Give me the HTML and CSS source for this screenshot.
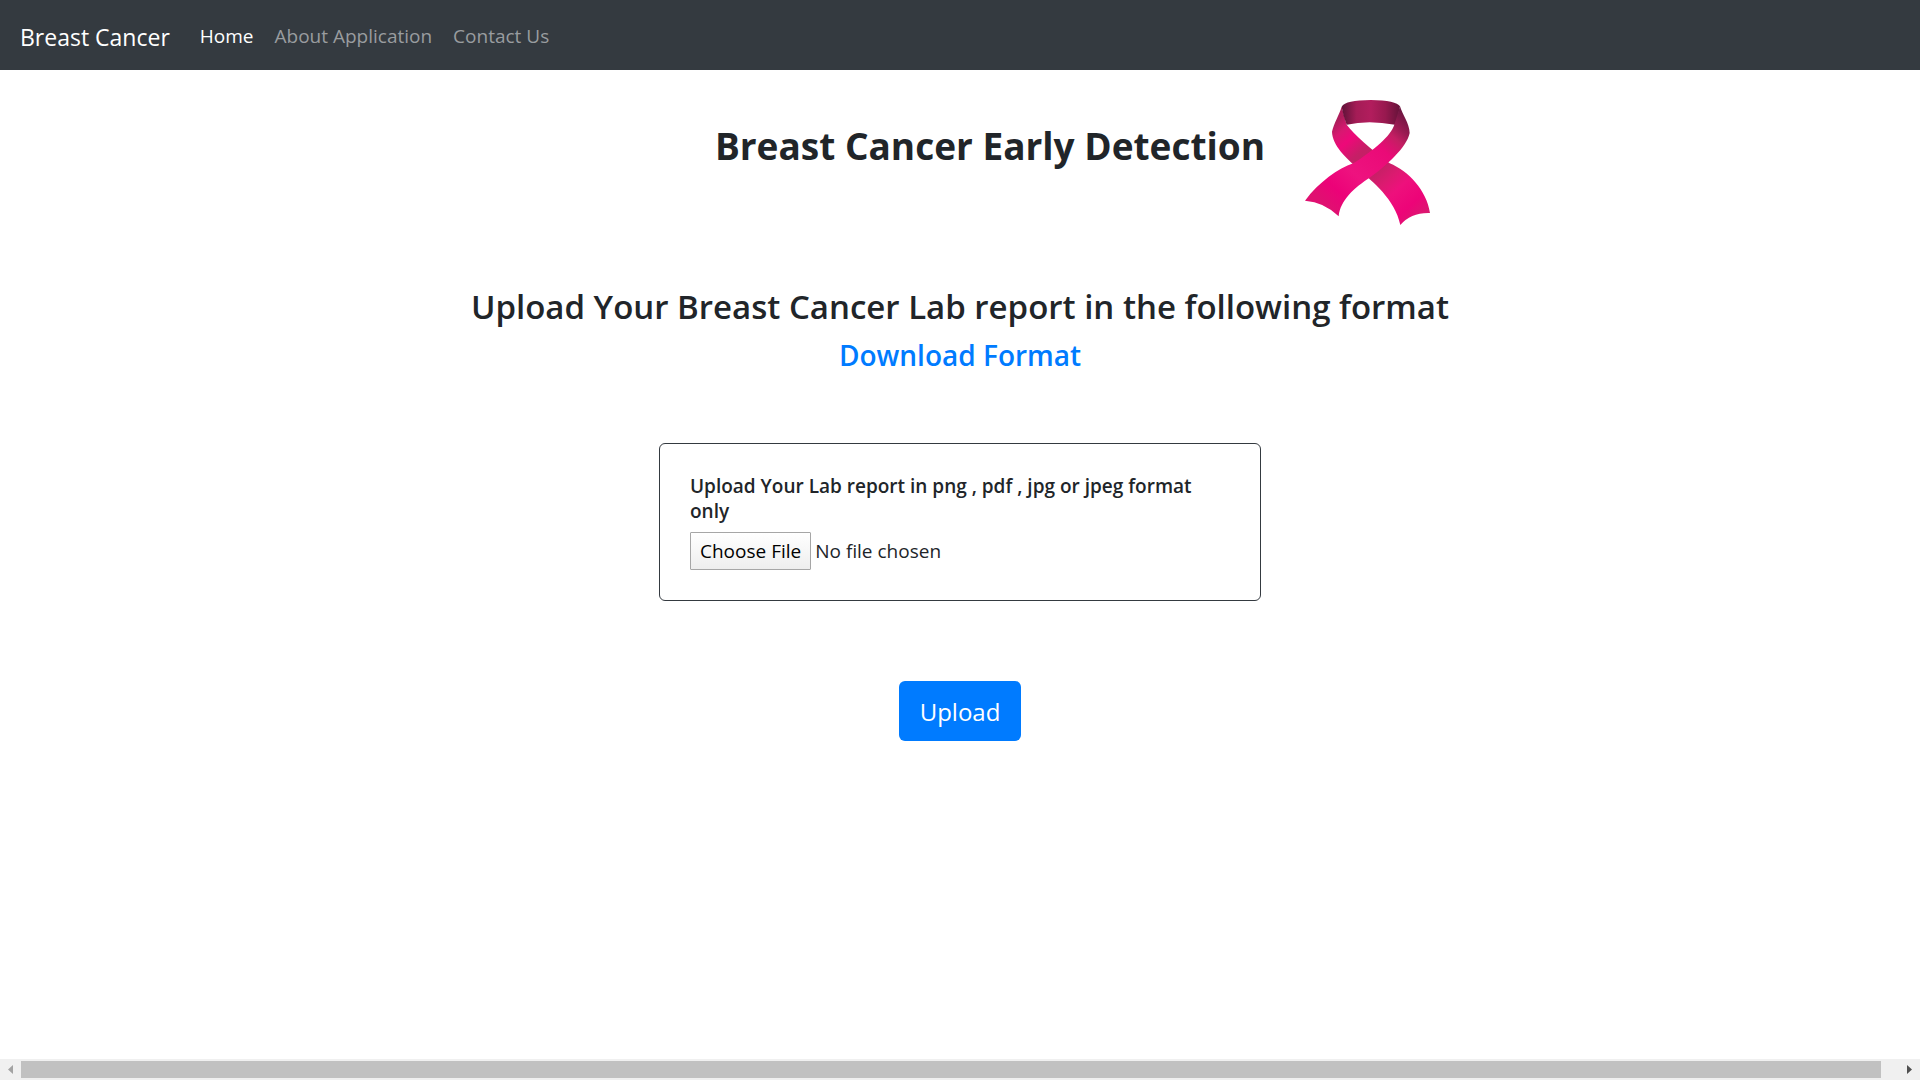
FILE: index.html
```html
<!DOCTYPE html>
<html lang="en">
<head>
<meta charset="utf-8">
<meta name="viewport" content="width=device-width, initial-scale=1">
<title>Breast Cancer</title>
<link rel="stylesheet" href="styles.css">
</head>
<body>
<nav class="navbar">
  <a class="navbar-brand" href="#">Breast Cancer</a>
  <a class="nav-link active" href="#">Home</a>
  <a class="nav-link" href="#">About Application</a>
  <a class="nav-link" href="#">Contact Us</a>
</nav>
<main class="content">
  <header class="masthead">
    <h1 class="title">Breast Cancer Early Detection</h1>
    <svg class="ribbon" viewBox="0 0 375 375" role="img" aria-label="Pink ribbon">
      <defs>
        <linearGradient id="loop" x1="0" x2="1" y1="0" y2="0">
          <stop offset="0" stop-color="#5f1238"/><stop offset=".25" stop-color="#a41c56"/><stop offset=".5" stop-color="#b21d5d"/><stop offset=".75" stop-color="#98194f"/><stop offset="1" stop-color="#651239"/>
        </linearGradient>
        <linearGradient id="back" gradientUnits="userSpaceOnUse" x1="100" y1="60" x2="360" y2="350">
          <stop offset="0" stop-color="#ae1d5b"/><stop offset=".08" stop-color="#d81871"/><stop offset=".17" stop-color="#ee0879"/><stop offset=".3" stop-color="#c51f66"/><stop offset=".48" stop-color="#c42065"/><stop offset=".6" stop-color="#dc1a70"/><stop offset=".7" stop-color="#ee107c"/><stop offset=".86" stop-color="#ed0478"/><stop offset="1" stop-color="#d81a6f"/>
        </linearGradient>
        <linearGradient id="front" gradientUnits="userSpaceOnUse" x1="300" y1="45" x2="60" y2="310">
          <stop offset="0" stop-color="#701641"/><stop offset=".12" stop-color="#9c1b53"/><stop offset=".2" stop-color="#c41e63"/><stop offset=".34" stop-color="#ea0a77"/><stop offset=".65" stop-color="#ee127f"/><stop offset=".85" stop-color="#ec0278"/><stop offset="1" stop-color="#e01071"/>
        </linearGradient>
      </defs>
      <path fill="url(#back)" d="M110 20C103 44 87 68 81 95C82 136 123 174 161 207C201 245 270 296 286 375Q318 337 375 339C365 271 310 213 254 190Q160 119 125 74Z"/>
      <path fill="url(#loop)" d="M110 20Q122 0 197 0Q274 1 285 19L274 75L270 74Q190 59 125 74Q114 46 110 20Z"/>
      <path fill="url(#front)" d="M285 19C292 43 313 70 314 99C305 143 243 197 196 232C147 264 106 301 101 349Q58 306 0 302C42 246 100 205 145 190C207 150 258 107 268 74L285 19Z"/>
    </svg>
  </header>
  <h2 class="subtitle">Upload Your Breast Cancer Lab report in the following format</h2>
  <h3 class="download"><a href="#">Download Format</a></h3>
  <form class="upload-form">
    <div class="card">
      <label class="file-label" for="report">Upload Your Lab report in png , pdf , jpg or jpeg format only</label>
      <input class="file-input" id="report" type="file" accept=".png,.pdf,.jpg,.jpeg">
    </div>
    <button class="upload-button" type="button">Upload</button>
  </form>
</main>
<div class="scrollbar" aria-hidden="true">
  <svg class="arrow" viewBox="0 0 21 21"><path fill="#a3a3a3" d="M13 6v9l-5-4.500z"/></svg>
  <div class="thumb"></div>
  <svg class="arrow arrow-end" viewBox="0 0 21 21"><path fill="#505050" d="M8 6v9l5-4.500z"/></svg>
</div>
</body>
</html>
```
FILE: styles.css
```css
* { box-sizing: border-box; }
body {
  margin: 0;
  min-height: 100vh;
  display: flex;
  flex-direction: column;
  background: #fff;
  color: #212529;
  font-family: "Open Sans", "Noto Sans", sans-serif;
  font-size: 19px;
}
a { color: #007bff; text-decoration: none; }
h1, h2, h3 { margin: 0; }

.navbar {
  display: flex;
  align-items: center;
  height: 70px;
  padding: 2px 20px 0;
  gap: 21px;
  background: #343a40;
}
.navbar-brand { color: #fff; font-size: 23px; margin-right: 9px; padding-top: 2px; }
.nav-link { color: #999c9f; }
.nav-link.active { color: #fff; }

.content {
  flex: 1;
  display: flex;
  flex-direction: column;
  align-items: center;
  padding: 30px 20px;
}
.masthead {
  display: flex;
  align-items: flex-start;
  gap: 40px;
  margin-left: 225px;
}
.title { font-size: 37px; font-weight: 700; line-height: 48px; padding-top: 22px; }
.ribbon { width: 125px; height: 125px; }
.subtitle { margin-top: 60px; font-size: 33px; font-weight: 600; line-height: 44px; text-align: center; }
.download { margin-top: 8px; font-size: 28px; font-weight: 600; line-height: 36px; }

.upload-form {
  display: flex;
  flex-direction: column;
  align-items: center;
  width: 100%;
  margin-top: 70px;
}
.card {
  width: 100%;
  max-width: 602px;
  padding: 30px;
  border: 1px solid #343a40;
  border-radius: 6px;
}
.file-label { display: block; margin-bottom: 8px; font-size: 19px; font-weight: 600; line-height: 25px; }
.file-input { display: block; width: 100%; font: inherit; }
.file-input::file-selector-button {
  height: 38px;
  margin: 0 4px 0 0;
  padding: 0 9px;
  border: 1px solid #a6a6a6;
  border-radius: 1px;
  background: linear-gradient(#fff, #eee);
  color: #000;
  font: inherit;
}
.upload-button {
  height: 60px;
  margin-top: 80px;
  padding: 0 21px;
  border: 0;
  border-radius: 6px;
  background: #007bff;
  color: #fff;
  font: inherit;
  font-size: 24px;
}

.scrollbar { display: flex; height: 21px; padding: 2px 0; background: #f0f0f0; }
.arrow { width: 21px; height: 21px; margin-top: -2px; }
.arrow-end { margin-left: 18px; }
.thumb { flex: 1; background: #c1c1c1; }
```
